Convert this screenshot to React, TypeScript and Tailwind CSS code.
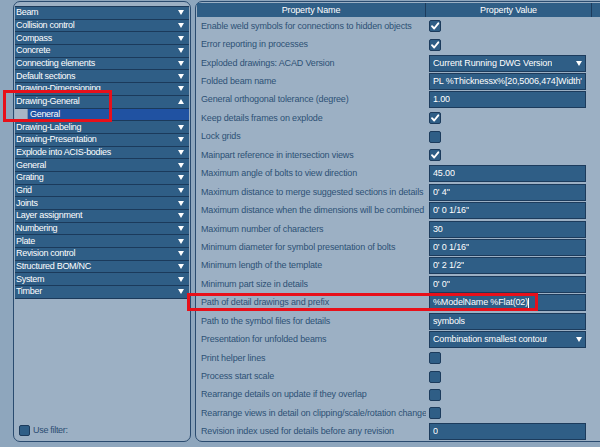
import React from "react";

const leftItems: { label: string; open?: boolean; sub?: boolean }[] = [
  { label: "Beam" },
  { label: "Collision control" },
  { label: "Compass" },
  { label: "Concrete" },
  { label: "Connecting elements" },
  { label: "Default sections" },
  { label: "Drawing-Dimensioning" },
  { label: "Drawing-General", open: true },
  { label: "General", sub: true },
  { label: "Drawing-Labeling" },
  { label: "Drawing-Presentation" },
  { label: "Explode into ACIS-bodies" },
  { label: "General" },
  { label: "Grating" },
  { label: "Grid" },
  { label: "Joints" },
  { label: "Layer assignment" },
  { label: "Numbering" },
  { label: "Plate" },
  { label: "Revision control" },
  { label: "Structured BOM/NC" },
  { label: "System" },
  { label: "Timber" },
];

type Val =
  | { t: "check"; v: boolean }
  | { t: "text"; v: string; cursor?: boolean }
  | { t: "drop"; v: string };

const rows: { name: string; val: Val }[] = [
  { name: "Enable weld symbols for connections to hidden objects", val: { t: "check", v: true } },
  { name: "Error reporting in processes", val: { t: "check", v: true } },
  { name: "Exploded drawings: ACAD Version", val: { t: "drop", v: "Current Running DWG Version" } },
  { name: "Folded beam name", val: { t: "text", v: 'PL %Thicknessx%[20,5006,474]Width"x%[20,5006,474]Length' } },
  { name: "General orthogonal tolerance (degree)", val: { t: "text", v: "1.00" } },
  { name: "Keep details frames on explode", val: { t: "check", v: true } },
  { name: "Lock grids", val: { t: "check", v: false } },
  { name: "Mainpart reference in intersection views", val: { t: "check", v: true } },
  { name: "Maximum angle of bolts to view direction", val: { t: "text", v: "45.00" } },
  { name: "Maximum distance to merge suggested sections in details", val: { t: "text", v: "0' 4\"" } },
  { name: "Maximum distance when the dimensions will be combined", val: { t: "text", v: "0' 0 1/16\"" } },
  { name: "Maximum number of characters", val: { t: "text", v: "30" } },
  { name: "Minimum diameter for symbol presentation of bolts", val: { t: "text", v: "0' 0 1/16\"" } },
  { name: "Minimum length of the template", val: { t: "text", v: "0' 2 1/2\"" } },
  { name: "Minimum part size in details", val: { t: "text", v: "0' 0\"" } },
  { name: "Path of detail drawings and prefix", val: { t: "text", v: "%ModelName %Flat(02)", cursor: true } },
  { name: "Path to the symbol files for details", val: { t: "text", v: "symbols" } },
  { name: "Presentation for unfolded beams", val: { t: "drop", v: "Combination smallest contour" } },
  { name: "Print helper lines", val: { t: "check", v: false } },
  { name: "Process start scale", val: { t: "check", v: false } },
  { name: "Rearrange details on update if they overlap", val: { t: "check", v: false } },
  { name: "Rearrange views in detail on clipping/scale/rotation change", val: { t: "check", v: false } },
  { name: "Revision index used for details before any revision", val: { t: "text", v: "0" } },
];

function Down({ up = false }: { up?: boolean }) {
  return (
    <svg width="6" height="5" viewBox="0 0 6 5" className="shrink-0">
      {up ? <path d="M0 5 L3 0 L6 5 Z" fill="#ffffff" /> : <path d="M0 0 L6 0 L3 5 Z" fill="#ffffff" />}
    </svg>
  );
}

function Check({ on }: { on: boolean }) {
  return (
    <div className="w-[12px] h-[12px] rounded-[2px] bg-[#2f5e86] border border-[#1c3b5c] flex items-center justify-center">
      {on && (
        <svg width="10" height="10" viewBox="0 0 10 10">
          <path d="M2 5.2 L4.2 7.5 L8.3 2.3" fill="none" stroke="#ffffff" strokeWidth="1.9" strokeLinecap="round" strokeLinejoin="round" />
        </svg>
      )}
    </div>
  );
}

export default function App() {
  return (
    <div className="relative w-[600px] h-[447px] overflow-hidden bg-[#8ea6bd] font-['Liberation_Sans',Arial,sans-serif] text-[9px] leading-none">
      <div className="flex gap-[4px] pl-[13px] pt-[1px]">
        {/* Left panel */}
        <div className="w-[178px] h-[441px] shrink-0 rounded-[7px] border border-[#2a4b6f] bg-[#9cb0c4] px-px pt-[4px] flex flex-col tracking-[-0.3px]">
          <div className="flex flex-col border-t border-[#1b3a5b]">
            {leftItems.map((it, i) =>
              it.sub ? (
                <div key={i} className="h-[12.7px] flex border-b border-[#1b3a5b]">
                  <div className="w-[13px] bg-[#a9b6c6] border-r border-[#7d93ab]" />
                  <div className="flex-1 bg-[#2052a2] text-white flex items-center pl-[2px]">{it.label}</div>
                </div>
              ) : (
                <div
                  key={i}
                  className="h-[12.7px] flex items-center justify-between bg-[#2f5e86] border-b border-[#1b3a5b] text-white pl-[1px] pr-[5px]"
                >
                  <span className="whitespace-nowrap">{it.label}</span>
                  <Down up={it.open} />
                </div>
              )
            )}
          </div>
          <div className="flex-1" />
          <div className="flex items-center gap-[3px] pl-[4px] pb-[5px]">
            <div className="w-[11px] h-[11px] rounded-[2px] bg-[#2f5e86] border border-[#1c3b5c]" />
            <span className="text-[#2b4d72]">Use filter:</span>
          </div>
        </div>

        {/* Right panel */}
        <div className="w-[412px] h-[441px] shrink-0 rounded-[7px] border border-[#2a4b6f] bg-[#9cb0c4] pl-px pt-px tracking-[-0.15px]">
          <div className="h-[14px] flex bg-[#2f5e86] text-white">
            <div className="w-[229px] flex items-center justify-center border-r border-[#1c3b5c]">Property Name</div>
            <div className="w-[166px] flex items-center justify-center border-r border-[#1c3b5c]">Property Value</div>
            <div className="flex-1" />
          </div>
          <div className="flex flex-col">
            {rows.map((r, i) => (
              <div key={i} className="h-[18.44px] flex items-center">
                <div className="w-[229px] pl-[4px] overflow-hidden whitespace-nowrap text-[#2d5075]">{r.name}</div>
                <div className="pl-[3px] h-full flex items-center">
                  {r.val.t === "check" ? (
                    <Check on={r.val.v} />
                  ) : (
                    <div className="w-[157px] h-[17px] bg-[#2f5e86] border border-[#1c3b5c] text-white flex items-center justify-between pl-[3px] pr-[3px] overflow-hidden">
                      <span className="whitespace-nowrap overflow-hidden">
                        {r.val.v}
                        {r.val.t === "text" && r.val.cursor && <span className="inline-block w-px h-[10px] bg-white align-middle" />}
                      </span>
                      {r.val.t === "drop" && <Down />}
                    </div>
                  )}
                </div>
              </div>
            ))}
          </div>
        </div>
      </div>

      {/* Annotation boxes */}
      <div className="absolute left-[3px] top-[90px] w-[109px] h-[32px] border-[3px] border-[#e8101a]" />
      <div className="absolute left-[187px] top-[293px] w-[351px] h-[18px] border-[3px] border-[#e8101a]" />
    </div>
  );
}
